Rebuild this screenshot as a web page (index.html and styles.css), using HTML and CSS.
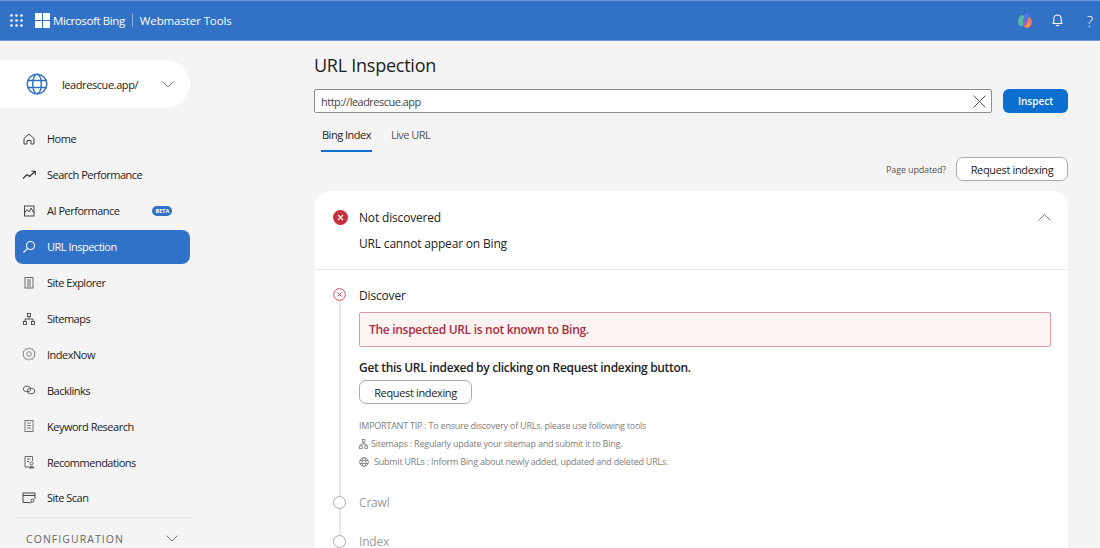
FILE: index.html
```html
<!DOCTYPE html>
<html lang="en">

<head>
  <meta charset="UTF-8">
  <title>URL Inspection - Bing Webmaster Tools</title>
  <link rel="stylesheet" href="styles.css">
</head>

<body>
  <header class="topbar">
    <svg class="waffle" width="13" height="13" viewBox="0 0 13 13" fill="#fff">
      <circle cx="1.500" cy="1.500" r="1.300" /><circle cx="6.500" cy="1.500" r="1.300" /><circle cx="11.500" cy="1.500" r="1.300" />
      <circle cx="1.500" cy="6.500" r="1.300" /><circle cx="6.500" cy="6.500" r="1.300" /><circle cx="11.500" cy="6.500" r="1.300" />
      <circle cx="1.500" cy="11.500" r="1.300" /><circle cx="6.500" cy="11.500" r="1.300" /><circle cx="11.500" cy="11.500" r="1.300" />
    </svg>
    <svg class="ms-logo" width="15" height="15" viewBox="0 0 15 15" fill="#fff">
      <rect x="0" y="0" width="7" height="7" /><rect x="8" y="0" width="7" height="7" />
      <rect x="0" y="8" width="7" height="7" /><rect x="8" y="8" width="7" height="7" />
    </svg>
    <span class="brand">Microsoft Bing</span>
    <span class="brand-sep"></span>
    <span class="brand-sub">Webmaster Tools</span>
    <div class="top-actions">
      <svg class="copilot" width="16" height="17" viewBox="0 0 16 17">
        <path d="M3 4 C5 2 7 3 7 6 L6 13 C4 15 1 14 1 10 C1 8 2 5 3 4Z" fill="#57b9a4" />
        <path d="M9 1 C12 1 12.500 4 11.500 7 L9 14 L6 13 L7 5 C7 3 8 1 9 1Z" fill="#4a78e6" />
        <path d="M6.500 9 L9.500 7 L9 14 L6 14Z" fill="#9a5fd0" />
        <path d="M11.500 5 C14 5 15 8 15 10 C15 14 12 16 9 16 L6 14 C9 14 10 11 11.500 5Z" fill="#ee6f6a" />
        <path d="M9 14.500 C11 13 11 10 11.800 7.500 L13 12 C13 14 11 16 9 16Z" fill="#f0a040" />
      </svg>
      <svg class="bell" width="11" height="13" viewBox="0 0 11 13" fill="none" stroke="#fff" stroke-width="1.100">
        <path d="M1 9.500 L1.800 8 V5 C1.800 2.800 3.300 1 5.500 1 C7.700 1 9.200 2.800 9.200 5 V8 L10 9.500 Z" stroke-linejoin="round" />
        <path d="M4 11 C4.300 12 6.700 12 7 11" />
      </svg>
      <span class="help">?</span>
    </div>
  </header>

  <div class="layout">
    <aside class="sidebar">
      <div class="site-picker">
        <svg width="22" height="22" viewBox="0 0 22 22" fill="none" stroke="#2f6fc0" stroke-width="1.400">
          <circle cx="11" cy="11" r="9.800" />
          <ellipse cx="11" cy="11" rx="4.300" ry="9.800" />
          <path d="M2 7.500 H20 M2 14.500 H20" />
        </svg>
        <span class="site-name">leadrescue.app/</span>
        <svg class="chev" width="12" height="7" viewBox="0 0 12 7" fill="none" stroke="#777" stroke-width="1">
          <path d="M.5 .5 L6 6 L11.500 .5" />
        </svg>
      </div>

      <nav class="nav">
        <a class="nav-item">
          <svg width="14" height="14" viewBox="0 0 14 14" fill="none" stroke="#444" stroke-width="1">
            <path d="M2 6.500 L7 2 L12 6.500 V12 H9 V8.500 H5 V12 H2 Z" stroke-linejoin="round" />
          </svg>
          Home
        </a>
        <a class="nav-item">
          <svg width="14" height="14" viewBox="0 0 14 14" fill="none" stroke="#333" stroke-width="1.100">
            <path d="M1 10.500 L5 6.500 L7.500 8.500 L13 3.500 M9.500 3.200 H13.300 V7" />
          </svg>
          Search Performance
        </a>
        <a class="nav-item">
          <svg width="14" height="14" viewBox="0 0 14 14" fill="none" stroke="#444" stroke-width="1">
            <rect x="2.500" y="2" width="9.500" height="10" />
            <path d="M2.500 9 L5 5.500 L7 8 L9 4 L12 9" />
          </svg>
          AI Performance
          <span class="beta">BETA</span>
        </a>
        <a class="nav-item active">
          <svg width="14" height="14" viewBox="0 0 14 14" fill="none" stroke="#fff" stroke-width="1.100">
            <circle cx="8.500" cy="5.500" r="4" />
            <path d="M5.500 8.500 L1.500 12.500" />
          </svg>
          URL Inspection
        </a>
        <a class="nav-item">
          <svg width="14" height="14" viewBox="0 0 14 14" fill="none" stroke="#666" stroke-width="1">
            <rect x="3" y="1.500" width="8" height="10.500" />
            <path d="M5 4 H9 M5 6 H9 M5 8 H9 M5 10 H9" />
          </svg>
          Site Explorer
        </a>
        <a class="nav-item">
          <svg width="14" height="14" viewBox="0 0 14 14" fill="none" stroke="#444" stroke-width=".9">
            <rect x="5.500" y="1.500" width="3" height="3" />
            <rect x="1.500" y="9.500" width="3" height="3" />
            <rect x="9.500" y="9.500" width="3" height="3" />
            <path d="M7 4.500 V7 M3 9.500 V7 H11 V9.500" />
          </svg>
          Sitemaps
        </a>
        <a class="nav-item">
          <svg width="14" height="14" viewBox="0 0 14 14" fill="none" stroke="#777" stroke-width=".9">
            <path d="M7 .8 L8.600 2.100 L10.600 1.800 L11.300 3.700 L13 4.800 L12.400 7 L13 9.200 L11.300 10.300 L10.600 12.200 L8.600 11.900 L7 13.200 L5.400 11.900 L3.400 12.200 L2.700 10.300 L1 9.200 L1.600 7 L1 4.800 L2.700 3.700 L3.400 1.800 L5.400 2.100 Z" stroke-linejoin="round" />
            <circle cx="7" cy="7" r="2.300" />
          </svg>
          IndexNow
        </a>
        <a class="nav-item">
          <svg width="14" height="14" viewBox="0 0 14 14" fill="none" stroke="#555" stroke-width=".9">
            <ellipse cx="5" cy="6" rx="3.800" ry="2.800" />
            <ellipse cx="9" cy="8" rx="3.800" ry="2.800" />
          </svg>
          Backlinks
        </a>
        <a class="nav-item">
          <svg width="14" height="14" viewBox="0 0 14 14" fill="none" stroke="#777" stroke-width="1">
            <rect x="3" y="1.500" width="8" height="11" />
            <path d="M5 4 H9 M5 6.500 H9 M5 9 H9" />
          </svg>
          Keyword Research
        </a>
        <a class="nav-item">
          <svg width="14" height="14" viewBox="0 0 14 14" fill="none" stroke="#666" stroke-width="1">
            <path d="M7 12 H3 V1.500 H10.500 V6" />
            <path d="M5 4 H8.500 M5 6.500 H7" />
            <circle cx="9.500" cy="8.500" r="1.500" />
            <path d="M7 13 C7 11 12 11 12 13 Z" fill="#666" />
          </svg>
          Recommendations
        </a>
        <a class="nav-item">
          <svg width="14" height="14" viewBox="0 0 14 14" fill="none" stroke="#444" stroke-width="1">
            <path d="M8 11.500 H1 V2 H13 V8" />
            <path d="M1 4.500 H13" />
            <circle cx="10.500" cy="9.500" r="1.500" />
            <path d="M9.500 11 L8.500 12.500" />
          </svg>
          Site Scan
        </a>
      </nav>

      <div class="config">
        <span>CONFIGURATION</span>
        <svg width="12" height="7" viewBox="0 0 12 7" fill="none" stroke="#777" stroke-width="1">
          <path d="M.5 .5 L6 6 L11.500 .5" />
        </svg>
      </div>
    </aside>

    <main class="main">
      <h1 class="page-title">URL Inspection</h1>

      <div class="search-row">
        <div class="url-box">
          <span class="url-text">http://leadrescue.app</span>
          <svg width="13" height="13" viewBox="0 0 13 13" fill="none" stroke="#555" stroke-width="1">
            <path d="M.5 .5 L12.500 12.500 M12.500 .5 L.5 12.500" />
          </svg>
        </div>
        <button class="inspect-btn">Inspect</button>
      </div>

      <div class="tabs">
        <a class="tab selected">Bing Index</a>
        <a class="tab">Live URL</a>
      </div>

      <div class="update-row">
        <span class="update-note">Page updated?</span>
        <button class="outline-btn wide">Request indexing</button>
      </div>

      <section class="result-card">
        <div class="result-head">
          <div class="status-line">
            <svg width="15" height="15" viewBox="0 0 15 15">
              <circle cx="7.500" cy="7.500" r="7.500" fill="#c9303e" />
              <path d="M5 5 L10 10 M10 5 L5 10" stroke="#fff" stroke-width="1.200" />
            </svg>
            <span>Not discovered</span>
            <svg class="collapse" width="13" height="7" viewBox="0 0 13 7" fill="none" stroke="#777" stroke-width="1">
              <path d="M.5 6.500 L6.500 .7 L12.500 6.500" />
            </svg>
          </div>
          <p class="status-sub">URL cannot appear on Bing</p>
        </div>

        <div class="steps">
          <div class="step">
            <div class="step-rail">
              <svg width="13" height="13" viewBox="0 0 13 13" fill="none" stroke="#c9505c" stroke-width="1">
                <circle cx="6.500" cy="6.500" r="5.800" />
                <path d="M4.500 4.500 L8.500 8.500 M8.500 4.500 L4.500 8.500" />
              </svg>
            </div>
            <div class="step-body">
              <h3 class="step-title">Discover</h3>
              <div class="alert">The inspected URL is not known to Bing.</div>
              <p class="get-indexed">Get this URL indexed by clicking on Request indexing button.</p>
              <button class="outline-btn">Request indexing</button>
              <div class="tips">
                <p>IMPORTANT TIP : To ensure discovery of URLs, please use following tools</p>
                <p>
                  <svg width="9" height="10" viewBox="0 0 9 10" fill="none" stroke="#777" stroke-width=".8">
                    <rect x="3.200" y=".5" width="2.600" height="2.600" />
                    <rect x=".5" y="6.800" width="2.600" height="2.600" />
                    <rect x="5.900" y="6.800" width="2.600" height="2.600" />
                    <path d="M4.500 3 V5 M1.800 6.800 V5 H7.200 V6.800" />
                  </svg>
                  Sitemaps : Regularly update your sitemap and submit it to Bing.
                </p>
                <p>
                  <svg class="tip-globe" width="10" height="10" viewBox="0 0 10 10" fill="none" stroke="#777" stroke-width=".8">
                    <circle cx="5" cy="5" r="4.400" />
                    <ellipse cx="5" cy="5" rx="2" ry="4.400" />
                    <path d="M1 3.500 H9 M1 6.500 H9" />
                  </svg>
                  Submit URLs : Inform Bing about newly added, updated and deleted URLs.
                </p>
              </div>
            </div>
          </div>

          <div class="step idle">
            <div class="step-rail"><span class="dot"></span></div>
            <div class="step-body">
              <h3 class="step-title">Crawl</h3>
            </div>
          </div>

          <div class="step idle">
            <div class="step-rail"><span class="dot"></span></div>
            <div class="step-body">
              <h3 class="step-title">Index</h3>
            </div>
          </div>
        </div>
      </section>
    </main>
  </div>
</body>

</html>
```

FILE: styles.css
```css
* {
  margin: 0;
  padding: 0;
  box-sizing: border-box;
  font-family: 'Open Sans', 'Noto Sans', sans-serif;
}

html,
body {
  height: 548px;
  overflow: hidden;
}

body {
  background: #f4f4f4;
  color: #222;
}

svg {
  flex-shrink: 0;
}

.topbar {
  display: flex;
  align-items: center;
  height: 41px;
  padding-left: 10px;
  background: #3272c6;
  border-top: 1px solid #6f9ad6;
  border-bottom: 1px solid #6f9ad6;
  color: #fff;
}

.ms-logo {
  margin-left: 12px;
}

.brand {
  margin-left: 3px;
  font-size: 11.500px;
  letter-spacing: -.4px;
}

.brand-sep {
  width: 1px;
  height: 13px;
  margin: 0 7px 0 7px;
  background: #8fb2e2;
}

.brand-sub {
  font-size: 11.500px;
  letter-spacing: -.1px;
}

.top-actions {
  display: flex;
  align-items: center;
  margin-left: auto;
}

.bell {
  margin-left: 19px;
}

.help {
  margin: 0 7px 0 24px;
  font-size: 15px;
  font-weight: 300;
}

.layout {
  display: flex;
  height: 507px;
}

.sidebar {
  width: 190px;
  flex-shrink: 0;
  padding-top: 19px;
}

.site-picker {
  display: flex;
  align-items: center;
  height: 48px;
  padding-left: 26px;
  background: #fff;
  border-radius: 0 24px 24px 0;
}

.site-name {
  margin-left: 14px;
  font-size: 11px;
  font-weight: 500;
  letter-spacing: -.42px;
}

.site-picker .chev {
  margin-left: 24px;
}

.nav {
  display: flex;
  flex-direction: column;
  margin: 13px -2px 0 15px;
  padding-bottom: 1px;
  border-bottom: 1px solid #e6e6e6;
}

.nav-item {
  display: flex;
  align-items: center;
  gap: 11px;
  height: 35.900px;
  padding-left: 7px;
  margin-right: 2px;
  font-size: 11px;
  font-weight: 500;
  letter-spacing: -.5px;
  color: #222;
}

.nav-item.active {
  height: 34px;
  margin-top: 1px;
  margin-bottom: 1px;
  background: #2f72c8;
  border-radius: 8px;
  color: #fff;
}

.beta {
  margin-left: 22px;
  padding: 0 3px;
  height: 10px;
  line-height: 10px;
  background: #2f72c8;
  border-radius: 5px;
  color: #fff;
  font-size: 5.500px;
  font-weight: 700;
  letter-spacing: 0;
}

.config {
  display: flex;
  align-items: center;
  justify-content: space-between;
  margin-top: 14px;
  padding: 0 12px 0 26px;
  font-size: 10.500px;
  font-weight: 500;
  letter-spacing: 1.050px;
  color: #666;
}

.main {
  flex: 1;
  padding: 11px 32px 0 124px;
  overflow: hidden;
}

.page-title {
  height: 37px;
  font-size: 18px;
  font-weight: 400;
  line-height: 26px;
  letter-spacing: -.25px;
  color: #222;
}

.search-row {
  display: flex;
  gap: 11px;
}

.url-box {
  flex: 1;
  display: flex;
  align-items: center;
  justify-content: space-between;
  height: 24px;
  padding: 0 5px 0 6px;
  background: #fff;
  border: 1px solid #8e8e8e;
  border-radius: 2px;
}

.url-text {
  font-size: 11px;
  letter-spacing: -.52px;
  color: #444;
}

.inspect-btn {
  width: 65px;
  height: 24px;
  background: #0a6fd1;
  border: none;
  border-radius: 6px;
  color: #fff;
  font-size: 10px;
  font-weight: 600;
}

.tabs {
  display: flex;
  gap: 19px;
  height: 26px;
  margin-left: 7px;
  margin-top: 13px;
}

.tab {
  height: 26px;
  font-size: 11px;
  line-height: 18px;
  letter-spacing: -.55px;
  color: #555;
}

.tab.selected {
  color: #222;
  font-weight: 500;
  letter-spacing: -.5px;
  border-bottom: 2px solid #0a6fd1;
  padding: 0 1px;
}

.update-row {
  display: flex;
  align-items: center;
  justify-content: flex-end;
  gap: 10px;
  margin-top: 5px;
}

.update-note {
  font-size: 9px;
  font-weight: 500;
  letter-spacing: -.15px;
  color: #555;
}

.outline-btn {
  display: block;
  width: 113px;
  height: 24px;
  background: #fff;
  border: 1px solid #aaa;
  border-radius: 7px;
  font-size: 11px;
  font-weight: 500;
  letter-spacing: -.35px;
  color: #222;
}

.outline-btn.wide {
  width: 112px;
}

.result-card {
  margin-top: 10px;
  height: 400px;
  margin-left: 1px;
  background: #fff;
  border-radius: 16px 16px 0 0;
}

.result-head {
  height: 79px;
  padding: 18px 17px 0 18px;
  border-bottom: 1px solid #ececec;
}

.status-line {
  display: flex;
  align-items: center;
  font-size: 12px;
  font-weight: 500;
  letter-spacing: -.17px;
}

.status-line span {
  margin-left: 11px;
}

.collapse {
  margin-left: auto;
}

.status-sub {
  margin-top: 9px;
  margin-left: 26px;
  font-size: 12px;
  font-weight: 500;
  letter-spacing: -.18px;
}

.steps {
  padding: 0 17px 0 18px;
}

.step {
  display: flex;
  gap: 13px;
}

.step-rail {
  width: 13px;
  flex-shrink: 0;
  display: flex;
  flex-direction: column;
  align-items: center;
  padding-top: 18px;
}

.step-rail::after {
  content: '';
  flex: 1;
  width: 2px;
  background: #e6e6e6;
}

.dot {
  width: 13px;
  height: 13px;
  flex-shrink: 0;
  border: 1px solid #aaa;
  border-radius: 50%;
}

.step-body {
  flex: 1;
  padding-top: 17px;
}

.step-title {
  font-size: 12px;
  font-weight: 500;
  line-height: 17px;
  letter-spacing: -.17px;
}

.idle .step-rail {
  padding-top: 0;
}

.idle .step-rail::before {
  content: '';
  height: 8px;
  width: 2px;
  flex-shrink: 0;
  background: #e6e6e6;
}

.idle .step-body {
  padding-top: 8px;
  padding-bottom: 18px;
}

.idle .step-title {
  line-height: 13px;
  color: #9a9a9a;
}

.alert {
  display: flex;
  align-items: center;
  height: 35px;
  margin-top: 8px;
  padding-left: 9px;
  background: #fdf3f3;
  border: 1px solid #dc9ca4;
  border-radius: 2px;
  font-size: 12px;
  font-weight: 600;
  letter-spacing: -.3px;
  color: #a92f42;
}

.get-indexed {
  margin-top: 12px;
  font-size: 12px;
  font-weight: 600;
  line-height: 17px;
  letter-spacing: -.32px;
}

.step-body .outline-btn {
  margin-top: 4px;
}

.tips {
  margin-top: 13px;
  padding-bottom: 17px;
  color: #808080;
  font-size: 9px;
  letter-spacing: -.23px;
  line-height: 18px;
}

.tips p {
  display: flex;
  align-items: center;
  gap: 3px;
  height: 18px;
}

.tip-globe {
  margin-right: 2px;
}
```
